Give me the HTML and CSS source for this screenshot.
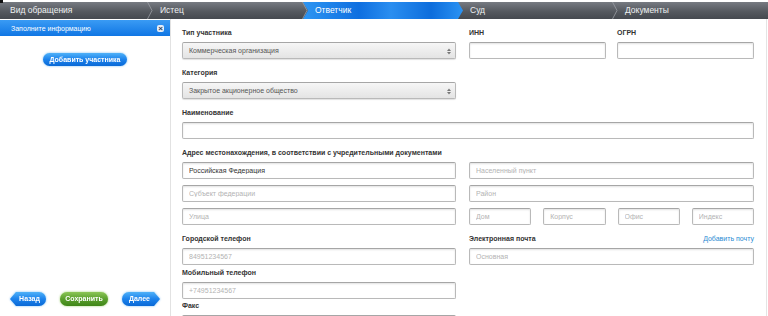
FILE: index.html
```html
<!DOCTYPE html>
<html lang="ru">
<head>
    <meta charset="UTF-8">
    <meta name="viewport" content="width=device-width, initial-scale=1.0">
    <title>Ответчик</title>
    <link rel="stylesheet" href="styles.css">
</head>
<body>
    <nav class="steps">
        <div class="step first">Вид обращения<svg class="sep" viewBox="0 0 6 17"><polyline points="0.5,0 5,8.5 0.5,17"/></svg></div>
        <div class="step">Истец<svg class="sep" viewBox="0 0 6 17"><polyline points="0.5,0 5,8.5 0.5,17"/></svg></div>
        <div class="step active">Ответчик</div>
        <div class="step">Суд<svg class="sep" viewBox="0 0 6 17"><polyline points="0.5,0 5,8.5 0.5,17"/></svg></div>
        <div class="step">Документы</div>
    </nav>

    <div class="layout">
        <aside class="sidebar">
            <div class="side-head">
                <span>Заполните информацию</span>
                <span class="close">&times;</span>
            </div>
            <div class="side-body">
                <span class="glow"><a class="btn blue add" href="#">Добавить участника</a></span>
            </div>
            <div class="side-foot">
                <span class="glow"><a class="btn blue back" href="#">Назад</a></span>
                <span class="glow green-glow"><a class="btn green save" href="#">Сохранить</a></span>
                <span class="glow"><a class="btn blue next" href="#">Далее</a></span>
            </div>
        </aside>

        <main class="form">
            <div class="row">
                <div class="field wide">
                    <label>Тип участника</label>
                    <div class="select">Коммерческая организация<svg class="arrows" viewBox="0 0 4 7"><polygon points="0,3 2,0.5 4,3"/><polygon points="0,4 2,6.5 4,4"/></svg></div>
                </div>
                <div class="field half">
                    <label>ИНН</label>
                    <input type="text">
                </div>
                <div class="field half">
                    <label>ОГРН</label>
                    <input type="text">
                </div>
            </div>

            <div class="row">
                <div class="field wide">
                    <label>Категория</label>
                    <div class="select">Закрытое акционерное общество<svg class="arrows" viewBox="0 0 4 7"><polygon points="0,3 2,0.5 4,3"/><polygon points="0,4 2,6.5 4,4"/></svg></div>
                </div>
            </div>

            <div class="field full">
                <label>Наименование</label>
                <input type="text">
            </div>

            <div class="field full">
                <label>Адрес местонахождения, в соответствии с учредительными документами</label>
                <div class="row tight">
                    <input class="wide" type="text" value="Российская Федерация">
                    <input class="right" type="text" placeholder="Населенный пункт">
                </div>
                <div class="row tight">
                    <input class="wide" type="text" placeholder="Субъект федерации">
                    <input class="right" type="text" placeholder="Район">
                </div>
                <div class="row tight">
                    <input class="wide" type="text" placeholder="Улица">
                    <div class="right quad">
                        <input type="text" placeholder="Дом">
                        <input type="text" placeholder="Корпус">
                        <input type="text" placeholder="Офис">
                        <input type="text" placeholder="Индекс">
                    </div>
                </div>
            </div>

            <div class="row">
                <div class="field wide short">
                    <label>Городской телефон</label>
                    <input type="text" placeholder="84951234567">
                </div>
                <div class="field right short">
                    <div class="label-row">
                        <label>Электронная почта</label>
                        <a class="link" href="#">Добавить почту</a>
                    </div>
                    <input type="text" placeholder="Основная">
                </div>
            </div>

            <div class="field wide short">
                <label>Мобильный телефон</label>
                <input type="text" placeholder="+74951234567">
            </div>

            <div class="field wide last">
                <label>Факс</label>
                <input type="text">
            </div>
        </main>
    </div>
</body>
</html>
```

FILE: styles.css
```css
html, body {
    margin: 0;
    padding: 0;
    height: 316px;
    overflow: hidden;
    background: #fff;
    font-family: "Liberation Sans", Arial, sans-serif;
    font-size: 7px;
    color: #333;
}
body::before {
    content: "";
    position: absolute;
    left: 0;
    top: 0;
    width: 3px;
    height: 3px;
    background: #111;
}

/* шаги сверху */
.steps {
    display: flex;
    height: 17px;
    margin-top: 2px;
    margin-left: -7px;
    background: linear-gradient(#777b82, #55595f 55%, #45494f);
}
.step {
    position: relative;
    flex: none;
    width: 160px;
    margin-right: -5px;
    padding-left: 12px;
    box-sizing: border-box;
    line-height: 17px;
    font-size: 8.5px;
    color: #eef0f2;
}
.step.first {
    padding-left: 17px;
}
.step .sep {
    position: absolute;
    right: 0;
    top: 0;
    width: 6px;
    height: 17px;
}
.step .sep polyline {
    fill: none;
    stroke: #9a9ea4;
    stroke-width: 0.8;
}
.step.active {
    z-index: 1;
    color: #fff;
    background: linear-gradient(90deg, #2d95f2, #0f6fe0 35%, #2a8ef0 55%, #0d6ddc 80%, #2b93f3);
    clip-path: polygon(0 0, 155px 0, 160px 50%, 155px 100%, 0 100%, 5px 50%);
}

.layout {
    display: flex;
    height: 297px;
    overflow: hidden;
}

/* левая панель */
.sidebar {
    display: flex;
    flex-direction: column;
    width: 170px;
    border-right: 1px solid #e2e2e2;
}
.side-head {
    display: flex;
    align-items: center;
    justify-content: space-between;
    height: 16px;
    margin-top: 1px;
    padding: 0 6px 0 11px;
    color: #fff;
    background: linear-gradient(#3a9bf4, #1076e4);
}
.close {
    display: inline-block;
    width: 7px;
    height: 7px;
    border-radius: 2px;
    background: #e6eef8;
    color: #2a3f5a;
    font-size: 8px;
    font-weight: bold;
    line-height: 7px;
    text-align: center;
}
.side-body {
    flex: 1;
    padding-top: 17px;
    text-align: center;
}
.side-foot {
    display: flex;
    gap: 14px;
    padding: 0 0 10px 10px;
}

.glow {
    display: inline-block;
    filter: drop-shadow(0 0 1px #9fd0f7) drop-shadow(0 0 0.5px #cfe8fb);
}
.green-glow {
    filter: drop-shadow(0 0 1px #b6dc93) drop-shadow(0 0 0.5px #dff0cf);
}
.btn {
    display: block;
    height: 14px;
    line-height: 14px;
    text-align: center;
    text-decoration: none;
    color: #fff;
    font-weight: bold;
    font-size: 7px;
    border-radius: 7px;
}
.btn.blue {
    background: linear-gradient(#4fb1f8, #1b82ec 50%, #0a69d6);
}
.btn.green {
    background: linear-gradient(#8cc657, #5a9f2c 50%, #3f8518);
}
.btn.add {
    width: 84px;
    height: 13px;
    line-height: 13px;
}
.btn.back {
    width: 36px;
    padding-left: 3px;
    box-sizing: border-box;
    border-radius: 0 7px 7px 0;
    clip-path: polygon(0 50%, 6px 0, 100% 0, 100% 100%, 6px 100%);
}
.btn.save {
    width: 48px;
}
.btn.next {
    width: 38px;
    padding-right: 3px;
    box-sizing: border-box;
    border-radius: 7px 0 0 7px;
    clip-path: polygon(0 0, calc(100% - 6px) 0, 100% 50%, calc(100% - 6px) 100%, 0 100%);
}

/* форма */
.form {
    width: 584px;
    padding: 9px 0 0 11px;
    border-right: 1px solid #e4e4e4;
}
.row {
    display: flex;
    gap: 11px;
    width: 572px;
}
.row > .wide {
    margin-right: 2px;
}
.field {
    margin-bottom: 9px;
}
.field.full {
    width: 572px;
}
.field.short {
    margin-bottom: 3px;
}
.field.last {
    margin-top: -1px;
}
.wide {
    flex: none;
    width: 274px;
}
.half {
    flex: none;
    width: 137px;
}
.right {
    flex: none;
    width: 285px;
}
label {
    display: block;
    height: 10px;
    line-height: 10px;
    margin-bottom: 4px;
    font-weight: bold;
    color: #333;
    white-space: nowrap;
}
.label-row {
    display: flex;
    justify-content: space-between;
    align-items: flex-start;
}
.link {
    line-height: 10px;
    color: #2b8bd3;
    text-decoration: none;
}
input, .select {
    display: block;
    width: 100%;
    height: 17px;
    margin: 0;
    padding: 0 6px;
    box-sizing: border-box;
    border: 1px solid #b9b9b9;
    border-top-color: #a6a6a6;
    border-radius: 2px;
    box-shadow: inset 0 1px 2px rgba(0, 0, 0, 0.12);
    font-family: inherit;
    font-size: 7px;
    color: #333;
    background: #fff;
}
input::placeholder {
    color: #b3b3b3;
}
.select {
    position: relative;
    line-height: 15px;
    color: #555;
    background: linear-gradient(#f6f6f6, #e4e4e4);
    box-shadow: 0 1px 1px rgba(0, 0, 0, 0.12);
}
.arrows {
    position: absolute;
    right: 4px;
    top: 5px;
    width: 4px;
    height: 7px;
}
.arrows polygon {
    fill: #777;
}
.row.tight {
    margin-bottom: 6px;
}
.row.tight:last-child {
    margin-bottom: 0;
}
.quad {
    display: flex;
    gap: 12px;
}
.quad input {
    flex: 1;
    min-width: 0;
}
```
